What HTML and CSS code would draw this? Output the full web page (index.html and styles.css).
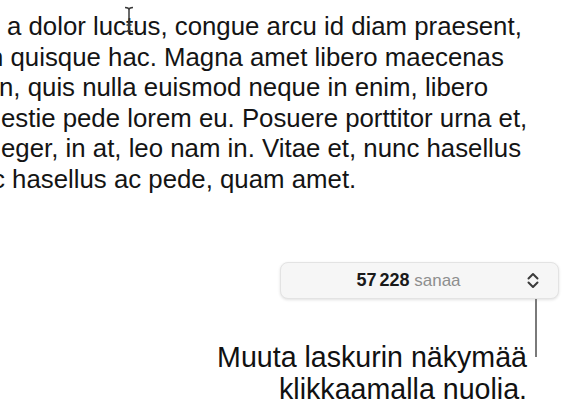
FILE: index.html
```html
<!DOCTYPE html>
<html lang="fi">
<head>
    <meta charset="UTF-8">
    <meta name="viewport" content="width=device-width, initial-scale=1.0">
    <title>Sanamäärä</title>
    <link rel="stylesheet" href="styles.css">
</head>
<body>

    <div class="page">
        <div class="doc">
            <div class="line l1">a dolor luctus, congue arcu id diam praesent,</div>
            <div class="line l2">n quisque hac. Magna amet libero maecenas</div>
            <div class="line l3">n, quis nulla euismod neque in enim, libero</div>
            <div class="line l4">estie pede lorem eu. Posuere porttitor urna et,</div>
            <div class="line l5">eger, in at, leo nam in. Vitae et, nunc hasellus</div>
            <div class="line l6">c hasellus ac pede, quam amet.</div>

            <!-- text cursor -->
            <svg class="ibeam" width="12" height="27" viewBox="0 0 12 27">
                <path d="M2 1.5 Q6 1.5 6 4 Q6 1.5 10 1.5 M6 4 V23 Q6 25.5 2 25.5 M6 23 Q6 25.5 10 25.5 M3.5 19 H8.5" fill="none" stroke="#3a3a3a" stroke-width="1.5"/>
            </svg>
        </div>

        <div class="counter-row">
            <div class="counter">
                <span class="count"><b>57 228</b> sanaa</span>
                <svg class="stepper" width="12" height="17" viewBox="0 0 12 17">
                    <path d="M1.5 6.5 L6 2 L10.5 6.5 M1.5 10.5 L6 15 L10.5 10.5" fill="none" stroke="#3b3b3b" stroke-width="2" stroke-linecap="round" stroke-linejoin="round"/>
                </svg>
            </div>
        </div>

        <div class="callout">
            <div class="callout-text">Muuta laskurin näkymää<br>klikkaamalla nuolia.</div>
            <div class="leader"></div>
        </div>
    </div>

</body>
</html>
```

FILE: styles.css
```css
/* Core styles */
body {
    margin: 0;
    background: #fff;
    font-family: "Liberation Sans", Arial, Helvetica, sans-serif;
    color: #111;
    overflow: hidden;
}

.page {
    width: 577px;
    height: 417px;
    overflow: hidden;
}

/* Document text, cut at the left edge */
.doc {
    position: relative;
    padding-top: 11px;
    font-size: 25.8px;
    line-height: 30.6px;
    color: #141414;
}

.line {
    white-space: nowrap;
}

.l1 { margin-left: 7px; }
.l2 { margin-left: -11px; }
.l3 { margin-left: -1px; }
.l4 { margin-left: 1px; }
.l5 { margin-left: 1px; }
.l6 { margin-left: -8px; }

.ibeam {
    position: absolute;
    left: 123px;
    top: 6px;
}

/* Word counter */
.counter-row {
    display: flex;
    justify-content: flex-end;
    padding: 67px 18px 0 0;
}

.counter {
    display: flex;
    align-items: center;
    width: 277px;
    height: 35px;
    background-color: #f6f6f6;
    border: 1px solid #e3e3e3;
    border-radius: 8px;
    box-shadow: 0 1px 3px rgba(0, 0, 0, 0.12);
}

.count {
    flex: 1;
    text-align: center;
    padding-left: 9px;
    font-size: 17px;
    color: #8e8e8e;
}

.count b {
    font-size: 18px;
    color: #1a1a1a;
    font-weight: bold;
    word-spacing: -2px;
}

.stepper {
    margin-right: 19px;
}

/* Callout */
.callout {
    display: flex;
    justify-content: flex-end;
    padding-right: 40px;
}

.callout-text {
    text-align: right;
    font-size: 28.6px;
    line-height: 32px;
    color: #111;
    margin-top: 42px;
    margin-right: 8px;
}

.leader {
    width: 2px;
    height: 58px;
    background-color: #7a7a7a;
}
```
